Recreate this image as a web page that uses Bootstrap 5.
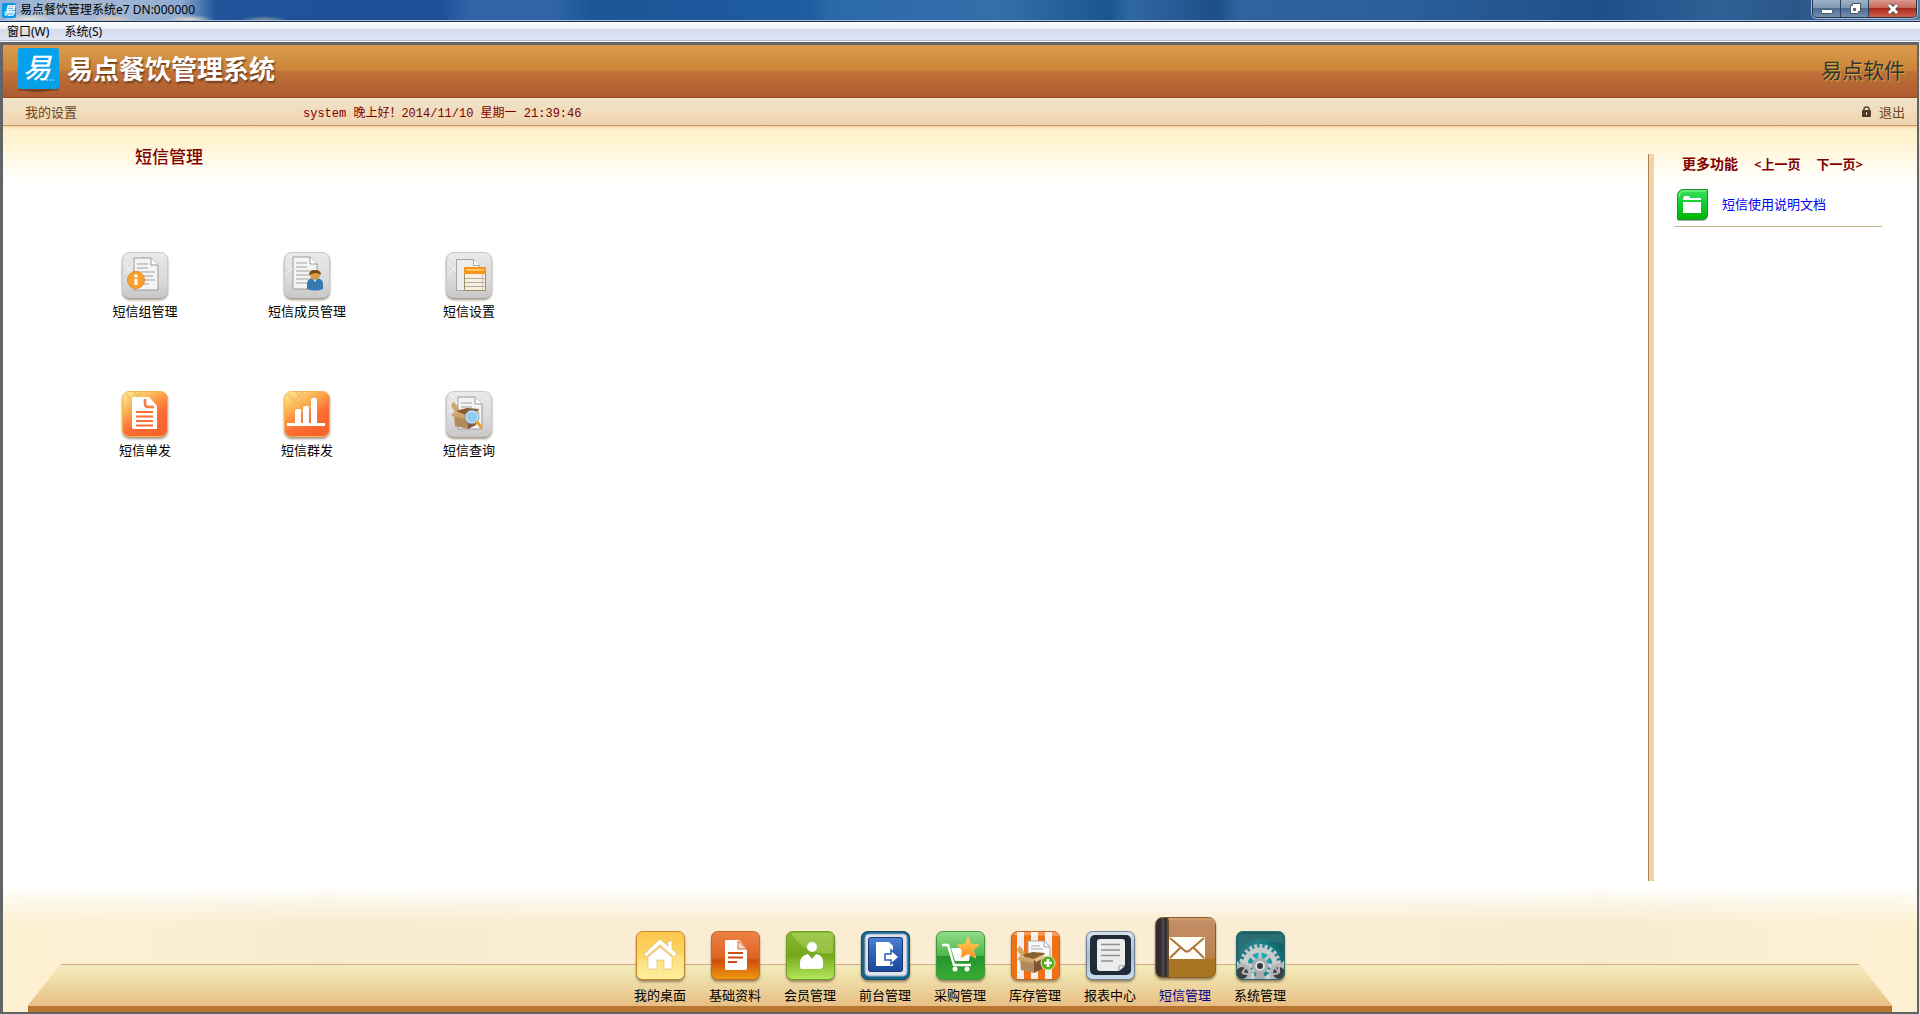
<!DOCTYPE html>
<html lang="zh-CN">
<head>
<meta charset="utf-8">
<meta name="viewport" content="width=device-width, initial-scale=1">
<title>易点餐饮管理系统e7</title>
<link href="https://cdn.jsdelivr.net/npm/bootstrap@5.3.0/dist/css/bootstrap.min.css" rel="stylesheet">
<style>
body{font-family:"Noto Sans","Noto Sans CJK SC",sans-serif;font-size:13px;line-height:20px;color:#000;background:#dfe5ef}
a{text-decoration:none;color:inherit}
svg{display:block;flex:none}
.titlebar{height:22px;border-bottom:1px solid #1b2c4a;box-shadow:inset 0 -1px #a9bfe0;font-size:12px;gap:4px;padding-left:2px;
 background:radial-gradient(ellipse 26px 7px at 28px 20px,#f5ecd8,transparent),radial-gradient(ellipse 24px 5px at 112px 20px,#e8cfae,transparent),radial-gradient(ellipse 24px 5px at 190px 20px,#eadccb,transparent),radial-gradient(ellipse 24px 4px at 264px 20px,#8a9c9c,transparent),
 linear-gradient(90deg,#8fb0d8 0,#a9bbd3 60px,#9db4d3 130px,#8fabd0 180px,#1f549b 216px,#1b4f98 440px,#2f65a8 470px,#2f65a8 555px,#1c5598 590px,#1f5ca0 810px,#2c69a9 830px,#346fab 1000px,#1a5591 1110px,#2f68a5 1130px,#1d4f88 1215px,#2d639f 1240px,#2a5f9c 1400px,#1f4f86 1600px,#2f6096 1720px,#2a5688 1800px,#5b7b9f 100%)}
.win-controls{height:18px;border:1px solid #23364f;border-top:0;border-radius:0 0 5px 5px;overflow:hidden;margin-right:3px;box-shadow:0 0 0 1px #a9bed6}
.win-controls button{border:0;border-right:1px solid #2c425e;width:28px;padding:0;background:linear-gradient(#9fb3ca 0,#7f98b5 45%,#4c6c92 50%,#7490b0 100%)}
.win-controls button:last-child{width:47px;border:0;background:linear-gradient(#d99a8e 0,#c8695a 45%,#a82a1b 50%,#d0604a 100%)}
.menubar{height:20px;font-size:12px;gap:15px;padding-left:7px;background:linear-gradient(#fff 0,#e8eef5 7px,#d2daeb 7px,#e0e5f5 18px,#b5bdce 18px,#b5bdce 19px,#f4f6fa 19px)}
.app-frame{border:solid #626468;border-width:3px 2px 2px 3px;margin-right:1px;background:#fff}
.brandbar{height:53px;border-bottom:1px solid #a14c13;padding:0 12px 2px 15px;background:linear-gradient(#db9b4e 0,#cd8a3c 20px,#c98238 26px,#c27339 26px,#ac5b30 100%)}
.brand-name{font-size:26px;line-height:36px;font-weight:700;color:#fff;text-shadow:1px 2px 2px #6e3b1c;padding-bottom:2px}
.vendor{font-size:21px;line-height:30px;color:#333;text-shadow:1px 1px 0 #d5a83e}
.subbar{height:28px;border-bottom:1px solid #bd9468;padding:0 12px 0 22px;color:#6b441f;background:linear-gradient(#f3e3c9,#efdfc0 40%,#f1d9b8 65%,#efd4b0)}
.settings-link{width:278px}
.greeting{font-family:"Liberation Mono","Noto Sans CJK SC",monospace;font-size:12px;color:#800000;padding-top:4px}
.workspace{background:linear-gradient(#fbd5a2 0,#fdeccb 3px,#fff2cf 4px,#fff2cf 16px,#fff8e2 30px,#fffefa 52px,#fff 62px)}
.page-title{font-size:17px;line-height:24px;font-weight:500;color:#800000;margin:19px 0 83px 132px}
.tiles{display:grid;grid-template-columns:repeat(3,162px);row-gap:70px;margin-left:61px}
.more-panel{width:269px;margin-top:28px;border-left:1px solid #a5835b;padding-left:25px;background:linear-gradient(90deg,#f2d3a2 5px,transparent 5px)}
.more-head{color:#800000;font-weight:700;padding-left:8px}
.more-title{font-size:14px}
.more-item{width:208px;border-bottom:1px solid #cbb58c;color:#00e;padding:15px 0 4px 3px;gap:14px}
.dockbar{height:131px;padding-bottom:7px;background:linear-gradient(#fff 6px,rgba(255,255,255,.5) 22px,transparent 44px),linear-gradient(90deg,#fef1d2,#fbeed2 160px,#f8eace 320px,#fbedd4 620px,#fbedd4 1300px,#f8eace 1600px,#fbeed2 1760px,#fef1d2)}
.dockbar::before{content:"";position:absolute;left:25px;right:25px;bottom:0;height:48px;background:linear-gradient(#d9ac88 1px,#f3eabd 1px,#f1e5b2 8px,#ebcf98 28px,#e8bf85 42px,#b97633 42px);clip-path:polygon(33px 0,calc(100% - 33px) 0,100% 41px,100% 100%,0 100%,0 41px)}
.dock-item{width:75px;gap:5px}
.dock-item.active{color:#00008b;gap:7px}
.dock-item svg,.tile svg{filter:drop-shadow(0 2px 1px rgba(70,50,20,.5))}
.tile{gap:3px}
</style>
<script src="https://cdn.jsdelivr.net/npm/bootstrap@5.3.0/dist/js/bootstrap.bundle.min.js"></script>
</head>
<body class="d-flex flex-column min-vh-100">
<svg width="0" height="0" class="position-absolute" aria-hidden="true">
<defs>
<linearGradient id="gGray" x2="0" y2="1"><stop stop-color="#e9e9e9"/><stop offset=".6" stop-color="#dadada"/><stop offset="1" stop-color="#c8c8c8"/></linearGradient>
<linearGradient id="gOrange" x2=".6" y2="1"><stop stop-color="#fff09a"/><stop offset=".35" stop-color="#fdb254"/><stop offset=".7" stop-color="#fb6e34"/><stop offset="1" stop-color="#fa642c"/></linearGradient>
<linearGradient id="gYellow" x2="0" y2="1"><stop stop-color="#fbc64b"/><stop offset=".5" stop-color="#fbd667"/><stop offset="1" stop-color="#ffee9c"/></linearGradient>
<linearGradient id="gRed" x2="0" y2="1"><stop stop-color="#ee8246"/><stop offset=".55" stop-color="#dc6423"/><stop offset=".6" stop-color="#cf4e0a"/><stop offset="1" stop-color="#f09a10"/></linearGradient>
<linearGradient id="gLime" x2="0" y2="1"><stop stop-color="#86b832"/><stop offset=".5" stop-color="#76a81c"/><stop offset="1" stop-color="#b4e95c"/></linearGradient>
<linearGradient id="gGreen" x2="0" y2="1"><stop stop-color="#93dd8a"/><stop offset=".5" stop-color="#4fb64a"/><stop offset=".52" stop-color="#26942b"/><stop offset="1" stop-color="#3aac35"/></linearGradient>
<linearGradient id="gBlue" x2="0" y2="1"><stop stop-color="#4f80d2"/><stop offset=".5" stop-color="#2c60b6"/><stop offset="1" stop-color="#1b479a"/></linearGradient>
<linearGradient id="gSteel" x2="0" y2="1"><stop stop-color="#d6e2ed"/><stop offset=".5" stop-color="#a9bdcf"/><stop offset="1" stop-color="#c9dcec"/></linearGradient>
<linearGradient id="gBook" x2="0" y2="1"><stop stop-color="#c58f6a"/><stop offset=".66" stop-color="#b9824b"/><stop offset=".7" stop-color="#a97424"/><stop offset="1" stop-color="#a77722"/></linearGradient>
<radialGradient id="gTeal" cy=".6"><stop stop-color="#2fc5cd"/><stop offset=".6" stop-color="#108790"/><stop offset="1" stop-color="#176067"/></radialGradient>
<linearGradient id="gFolder" x2="0" y2="1"><stop stop-color="#3fe05c"/><stop offset=".5" stop-color="#11cc30"/><stop offset="1" stop-color="#00b304"/></linearGradient>
<linearGradient id="gStar" x2="0" y2="1"><stop stop-color="#ffd84e"/><stop offset="1" stop-color="#ff8a20"/></linearGradient>
<clipPath id="tealClip"><rect x="1" y="1" width="47" height="47" rx="6"/></clipPath>
<g id="grayTile"><rect x=".5" y=".5" width="45" height="45" rx="7" fill="url(#gGray)" stroke="#c8c8c8"/><path d="M4 3l8 10L2 22M2 11l11 12M19 2L9 14" fill="none" stroke="#f6f6f6"/></g>
<g id="orangeTile"><rect x=".5" y=".5" width="45" height="45" rx="7" fill="url(#gOrange)" stroke="#f6b24d"/><path d="M4 3l17 20M19 1L1 20M12 1l15 16" fill="none" stroke="#eebf62" stroke-width="1.3"/></g>
<g id="sheet"><path d="M0 0h17l7 7v25H0z" fill="#f4f4f4" stroke="#9b9b9b"/><path d="M17 0v7h7" fill="#fff" stroke="#9b9b9b"/><path d="M3 6h11M3 10h11M3 14h18M3 18h16M3 22h18M3 26h12" stroke="#a2a2a2" stroke-width="1.2"/></g>
<g id="carton"><path d="M4 9l12-3 12 1-3 4-8 3z" fill="#8a5d2d"/><path d="M3 12l14 2v13L4 24z" fill="#b08a5a"/><path d="M17 14l8-3v12l-8 4z" fill="#7d5630"/><path d="M4 10L0 4l2-4 3 2 3 6zM3 10l-3 4 16 3 2-4z" fill="#cfa56c"/><path d="M17 13l8-4 4 2-10 5z" fill="#e6c28c"/></g>
</defs>
</svg>

<header class="titlebar d-flex align-items-start">
 <svg width="14" height="19" viewBox="0 0 14 19"><rect y="3" width="14" height="15" rx="2" fill="#0a98e6"/><text x="1" y="15" font-size="12" font-weight="700" font-style="italic" fill="#fff">易</text></svg>
 <span class="flex-fill">易点餐饮管理系统e7 DN:000000</span>
 <div class="win-controls d-flex">
  <button type="button" aria-label="最小化"><svg class="mx-auto" width="14" height="16" viewBox="0 0 14 16"><rect x="1.500" y="8.500" width="11" height="4" rx="1" fill="#fff" stroke="#4c5763"/></svg></button>
  <button type="button" aria-label="还原"><svg class="mx-auto" width="14" height="16" viewBox="0 0 14 16"><path d="M4.500 2.500h8v8h-2v2h-8v-8h2z" fill="#fff" stroke="#4c5763"/><path d="M5.500 7.500h2v2h-2z" fill="#5f7a9c" stroke="#4c5763"/></svg></button>
  <button type="button" aria-label="关闭"><svg class="mx-auto" width="14" height="16" viewBox="0 0 14 16"><path d="M3 4l8 8M11 4l-8 8" stroke="#5a4a4f" stroke-width="5"/><path d="M3 4l8 8M11 4l-8 8" stroke="#fff" stroke-width="3"/></svg></button>
 </div>
</header>
<nav class="menubar d-flex align-items-center"><a href="#">窗口(W)</a><a href="#">系统(S)</a></nav>

<div class="app-frame d-flex flex-column flex-fill">
 <div class="brandbar d-flex align-items-center justify-content-between">
  <div class="d-flex align-items-center gap-2">
   <svg width="41" height="44" viewBox="0 0 41 44"><ellipse cx="20" cy="41" rx="14" ry="3" fill="#7d4420"/><rect y="2" width="41" height="41" rx="3" fill="#6e421f" opacity=".7"/><rect width="41" height="41" rx="3" fill="#07a0ea"/><text x="5" y="30" font-size="28" font-weight="500" font-style="italic" fill="#fff">易</text><path d="M28 32h9" stroke="#bfe6fa" stroke-dasharray="2 1"/></svg>
   <span class="brand-name">易点餐饮管理系统</span>
  </div>
  <span class="vendor">易点软件</span>
 </div>
 <div class="subbar d-flex align-items-center">
  <a href="#" class="settings-link">我的设置</a>
  <span class="greeting flex-fill">system 晚上好！2014/11/10 星期一 21:39:46</span>
  <a href="#" class="d-flex align-items-center gap-2"><svg width="9" height="11" viewBox="0 0 9 11"><path d="M2 5V3q0-2 2.500-2T7 3v2" fill="none" stroke="#5a4030" stroke-width="1.500"/><rect y="4" width="9" height="7" rx="1" fill="#513a2c"/><path d="M4 6h1v3H4z" fill="#f0dcc0"/></svg>退出</a>
 </div>

 <main class="workspace d-flex flex-fill">
  <section class="flex-fill">
   <h1 class="page-title">短信管理</h1>
   <div class="tiles">
    <a href="#" class="tile d-flex flex-column align-items-center"><svg width="46" height="46" viewBox="0 0 46 46"><use href="#grayTile"/><use href="#sheet" x="12" y="6"/><circle cx="14" cy="28" r="8.500" fill="#f9a130" stroke="#e98a1b"/><path d="M14 27v6" stroke="#fff" stroke-width="3"/><circle cx="14" cy="24" r="1.700" fill="#fff"/></svg>短信组管理</a>
    <a href="#" class="tile d-flex flex-column align-items-center"><svg width="46" height="46" viewBox="0 0 46 46"><use href="#grayTile"/><use href="#sheet" x="9" y="5"/><path d="M23 37v-6q1-5 8-5t8 5v6q-8 3-16 0z" fill="#3579b5"/><path d="M28 26l3 4 3-4z" fill="#e9f2fa"/><circle cx="31" cy="23" r="5" fill="#d89c4d"/><path d="M25 23q0-5 6-5t6 5q-3-2-5-2-3 0-7 2z" fill="#7b4a12"/></svg>短信成员管理</a>
    <a href="#" class="tile d-flex flex-column align-items-center"><svg width="46" height="46" viewBox="0 0 46 46"><use href="#grayTile"/><path d="M10.500 7.500h17l6 6v25h-23z" fill="#eee" stroke="#a6a6a6"/><path d="M27.500 7.500v6h6" fill="#fff" stroke="#a6a6a6"/><path d="M18.500 16.500h21v22h-21z" fill="#f7f1e5" stroke="#a08e6c"/><path d="M18 15h22v7H18z" fill="#f7941c"/><path d="M20 18h18" stroke="#ffc25e" stroke-width="2"/><path d="M19 26.500h20M19 30.500h20M19 34.500h20" stroke="#b5ab98"/><path d="M36.500 22v16" stroke="#c7bca7"/></svg>短信设置</a>
    <a href="#" class="tile d-flex flex-column align-items-center"><svg width="46" height="46" viewBox="0 0 46 46"><use href="#orangeTile"/><path d="M11 6h16l8 9v23H11q-1 0-1-2V8q0-2 1-2z" fill="#fff"/><path d="M23 8v5q0 3 3 3h6" fill="none" stroke="#fa7a3d" stroke-width="2.500"/><path d="M14 21h17M14 25.500h17M14 30h17M14 34.500h17" stroke="#fb6e34" stroke-width="2"/></svg>短信单发</a>
    <a href="#" class="tile d-flex flex-column align-items-center"><svg width="46" height="46" viewBox="0 0 46 46"><use href="#orangeTile"/><path d="M3 32h38v3H3zM11 20q0-2 2-2h2q2 0 2 2v13h-6zM19 17q0-2 2-2h2q2 0 2 2v16h-6zM27 9q0-2 2-2h2q2 0 2 2v24h-6z" fill="#fff"/></svg>短信群发</a>
    <a href="#" class="tile d-flex flex-column align-items-center"><svg width="46" height="46" viewBox="0 0 46 46"><use href="#grayTile"/><use href="#sheet" x="12" y="6"/><use href="#carton" x="5" y="11"/><circle cx="26" cy="26" r="6" fill="#8ecbf3" stroke="#d5e6f2" stroke-width="1.500"/><circle cx="26" cy="26" r="7" fill="none" stroke="#5f93bb" stroke-width=".8"/><path d="M31 31l4 5" stroke="#f0a12c" stroke-width="3" stroke-linecap="round"/></svg>短信查询</a>
   </div>
  </section>
  <aside class="more-panel">
   <div class="more-head d-flex align-items-center"><span class="more-title me-3">更多功能</span><a href="#" class="me-3">&lt;上一页</a><a href="#">下一页&gt;</a></div>
   <a href="#" class="more-item d-flex align-items-center"><svg width="31" height="33" viewBox="0 0 31 33"><path d="M6 2h25v24q0 6-6 6H1V8q0-5 5-6z" fill="#777" opacity=".6"/><path d="M6 .5h24.500V25q0 5.500-6 5.500H.5V7Q.5 1 6 .5z" fill="url(#gFolder)" stroke="#129a24"/><path d="M2 8q0-6 6-6h21" fill="none" stroke="#8ff29d"/><path d="M7 7h5l1 2h11v2H6zM6 13h18v11H6z" fill="#fff"/></svg><span class="pb-1">短信使用说明文档</span></a>
  </aside>
 </main>

 <footer class="dockbar position-relative d-flex justify-content-center align-items-end">
  <a href="#" class="dock-item position-relative d-flex flex-column align-items-center"><svg width="49" height="49" viewBox="0 0 49 49"><rect x=".5" y=".5" width="48" height="48" rx="6" fill="url(#gYellow)" stroke="#c58a2e"/><path d="M2 28q22 4 45-6v25H2z" fill="#fff0a0" opacity=".35"/><path d="M24 8L8 23l2 3 14-12 14 12 3-3-5-5v-8h-4v5zM12 26l12-10 12 10v12h-8v-9h-7v9h-9z" fill="#fff" stroke="#e0b565" stroke-width=".6"/></svg>我的桌面</a>
  <a href="#" class="dock-item position-relative d-flex flex-column align-items-center"><svg width="49" height="49" viewBox="0 0 49 49"><rect x=".5" y=".5" width="48" height="48" rx="6" fill="url(#gRed)" stroke="#c4692d"/><path d="M15 9h13l8 9v19q0 2-2 2H15q-1 0-1-2V11q0-2 1-2z" fill="#fff"/><path d="M27 10v8h9z" fill="#f9dcc7" stroke="#d9682e"/><path d="M17 22h15M17 26.500h15M17 31h9" stroke="#c9500f" stroke-width="2"/></svg>基础资料</a>
  <a href="#" class="dock-item position-relative d-flex flex-column align-items-center"><svg width="49" height="49" viewBox="0 0 49 49"><rect x=".5" y=".5" width="48" height="48" rx="6" fill="url(#gLime)" stroke="#6f9f26"/><path d="M2 2h45v20Q20 26 5 2z" fill="#cdeb86" opacity=".35"/><circle cx="26" cy="16" r="5" fill="#fff"/><path d="M14 36v-5q1-7 8-8l4 5 4-5q7 1 7 8v5q-1 2-3 2H16q-2 0-2-2z" fill="#fff"/></svg>会员管理</a>
  <a href="#" class="dock-item position-relative d-flex flex-column align-items-center"><svg width="49" height="49" viewBox="0 0 49 49"><rect x=".5" y=".5" width="48" height="48" rx="6" fill="#14698c" stroke="#104c68"/><rect x="4" y="3" width="42" height="42" rx="4" fill="#dfe3ee" stroke="#98a6bf"/><rect x="7.500" y="6.500" width="34" height="34" rx="2" fill="url(#gBlue)" stroke="#17366f"/><path d="M15 11h13l4 4v20H15z" fill="#fff"/><path d="M24 23h6v-4l8 7-8 7v-4h-6z" fill="#fff" stroke="#2c60b6" stroke-width="1.500"/></svg>前台管理</a>
  <a href="#" class="dock-item position-relative d-flex flex-column align-items-center"><svg width="49" height="49" viewBox="0 0 49 49"><rect x=".5" y=".5" width="48" height="48" rx="6" fill="url(#gGreen)" stroke="#3b9a3a"/><path d="M15 17h20l-2 13H19z" fill="#fff"/><path d="M6 14h6l6 20h17" fill="none" stroke="#fff" stroke-width="2.500"/><circle cx="19" cy="38" r="2.500" fill="#fff"/><circle cx="31" cy="38" r="2.500" fill="#fff"/><path d="M32 6l3 7 8 1-6 5 3 8-8-4-7 4 1-8-5-5 8-1z" fill="url(#gStar)" stroke="#fbbd62" stroke-width=".8"/></svg>采购管理</a>
  <a href="#" class="dock-item position-relative d-flex flex-column align-items-center"><svg width="49" height="49" viewBox="0 0 49 49"><rect x=".5" y=".5" width="48" height="48" rx="6" fill="#ee7215" stroke="#c9661f"/><path d="M6 1h7v47H6zM20 1h7v47h-7zM34 1h7v47h-7z" fill="#f0efed"/><path d="M2 4q1-3 5-3h36q4 0 5 4z" fill="#fff" opacity=".3"/><path d="M17 10h16l6 6v17H17z" fill="#f8f8f8" stroke="#a7a7a7"/><path d="M33 10v6h6M20 15h9M20 18h12" fill="none" stroke="#a7a7a7"/><use href="#carton" x="6" y="15"/><circle cx="37" cy="32" r="7" fill="#5cad22" stroke="#d6efb6"/><path d="M37 28v8M33 32h8" stroke="#fff" stroke-width="2.500"/></svg>库存管理</a>
  <a href="#" class="dock-item position-relative d-flex flex-column align-items-center"><svg width="49" height="49" viewBox="0 0 49 49"><rect x=".5" y=".5" width="48" height="48" rx="6" fill="url(#gSteel)" stroke="#6d8294"/><rect x="4" y="4" width="41" height="40" rx="5" fill="#202b3a"/><path d="M14 8h22q3 0 3 3v23l-6 6H14q-3 0-3-3V11q0-3 3-3z" fill="#ececec"/><path d="M33 40v-5h6z" fill="#fff" stroke="#777" stroke-width=".8"/><path d="M15 13.500h19M15 19h19M15 24.500h19M15 30h12" stroke="#8f8f8f" stroke-width="1.500"/></svg>报表中心</a>
  <a href="#" class="dock-item active position-relative d-flex flex-column align-items-center"><svg width="61" height="61" viewBox="0 0 61 61"><rect x=".5" y=".5" width="60" height="60" rx="7" fill="url(#gBook)" stroke="#8f5a22"/><path d="M12 1H7Q1 1 1 8v45q0 7 6 7h5z" fill="#332c2e"/><path d="M8 1v59" stroke="#4b4547" stroke-width="3"/><path d="M13 1v59" stroke="#6b4a2c" stroke-width="2"/><path d="M13 2h41q5 0 6 5" fill="none" stroke="#dca978"/><rect x="14" y="20" width="36" height="22" rx="1" fill="#fffdf5"/><path d="M15 21l15 13q2 1 4 0l15-13M15 41l11-11M49 41L38 30" fill="none" stroke="#aa7536" stroke-width="2"/></svg>短信管理</a>
  <a href="#" class="dock-item position-relative d-flex flex-column align-items-center"><svg width="49" height="49" viewBox="0 0 49 49"><rect x=".5" y=".5" width="48" height="48" rx="6" fill="url(#gTeal)" stroke="#2a6d71"/><g clip-path="url(#tealClip)"><circle cx="24" cy="34" r="19" fill="none" stroke="#c3c6c8" stroke-width="4" stroke-dasharray="3 2.200"/><circle cx="24" cy="34" r="15" fill="none" stroke="#cbcdcf" stroke-width="5"/><path d="M24 34L13 23M24 34l11-11M24 34V18M24 34H8M24 34h17" stroke="#c6c9cb" stroke-width="3"/><circle cx="24" cy="35" r="8" fill="#aaadb0"/><g fill="#3c4144" stroke="#b4b7ba" stroke-width="4"><circle cx="6" cy="42" r="8"/><circle cx="43" cy="42" r="8"/></g><g fill="none" stroke="#cccfd1" stroke-width="3" stroke-dasharray="3 2"><circle cx="6" cy="42" r="11"/><circle cx="43" cy="42" r="11"/></g><path d="M6 42l5-7M6 42l9 2M43 42l-5-7M43 42l-9 2M43 42v-9" stroke="#b4b7ba" stroke-width="2"/><circle cx="24" cy="35" r="4" fill="#33383b" stroke="#dcdee0" stroke-width="2"/><path d="M18 49l3-8h6l3 8z" fill="#a9acaf"/></g><path d="M2 3h45v10Q25 4 2 26z" fill="#fff" opacity=".08"/></svg>系统管理</a>
 </footer>
</div>
</body>
</html>
